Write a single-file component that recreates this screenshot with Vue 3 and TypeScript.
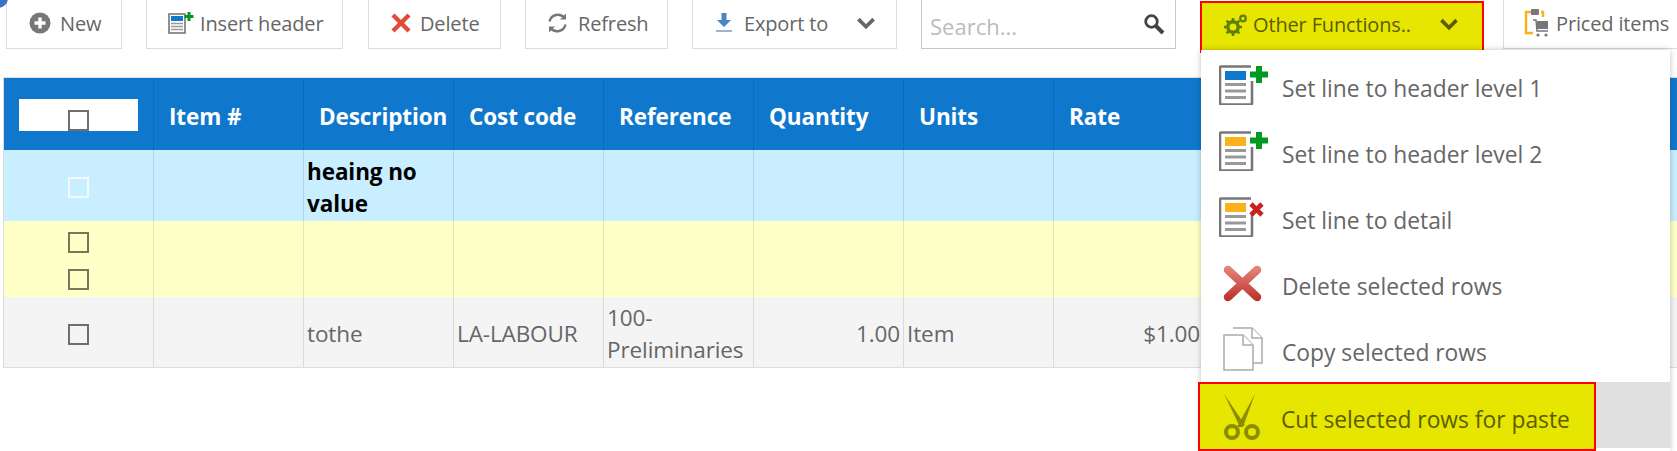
<script setup lang="ts">
const columns = ['Item #', 'Description', 'Cost code', 'Reference', 'Quantity', 'Units', 'Rate', '', '', '']
</script>

<template>
  <div class="page">
    <span class="corner"></span>
    <div class="toolbar">
      <button class="btn btn-new">
        <svg width="22" height="22" viewBox="0 0 22 22"><circle cx="11" cy="11" r="10.5" fill="#777" /><path d="M11 5.5v11M5.5 11h11" stroke="#fff" stroke-width="3.4" /></svg>
        New
      </button>
      <button class="btn btn-insert">
        <svg width="26" height="22" viewBox="0 0 26 22">
          <rect x="1" y="2" width="16" height="19" fill="#fff" stroke="#777" stroke-width="1.6" />
          <rect x="3" y="4" width="12" height="5" fill="#1078cc" />
          <path d="M3 11.5h12M3 14.5h12M3 17.5h12" stroke="#999" stroke-width="1.4" />
          <path d="M21 0v9M16.500 4.500h9" stroke="#009a22" stroke-width="3" />
        </svg>
        Insert header
      </button>
      <button class="btn btn-delete">
        <svg width="22" height="20" viewBox="0 0 22 20"><path d="M3 2l16 16M19 2L3 18" stroke="#e04b3a" stroke-width="4.400" /></svg>
        Delete
      </button>
      <button class="btn btn-refresh">
        <svg width="23" height="22" viewBox="0 0 22 22" fill="none" stroke="#777" stroke-width="2.400">
          <path d="M3 9.500A8.500 8.500 0 0 1 18 6" />
          <path d="M19 12.500A8.500 8.500 0 0 1 4 16" />
          <path d="M19.500 1.500v6h-6z" fill="#777" stroke="none" />
          <path d="M2.500 20.500v-6h6z" fill="#777" stroke="none" />
        </svg>
        Refresh
      </button>
      <button class="btn btn-export">
        <svg width="18" height="20" viewBox="0 0 18 20" fill="#4a86c5"><path d="M6.500 0h5v7h4.500L9 14 2 7h4.500z" /><rect x="1" y="17" width="16" height="2" fill="#9ab6d3" /></svg>
        <span class="btn-label">Export to</span>
        <svg class="chev" width="20" height="13" viewBox="0 0 18 12"><path d="M2 2l7 7 7-7" fill="none" stroke="#666" stroke-width="3.400" /></svg>
      </button>
      <div class="search">
        <span class="search-text">Search...</span>
        <svg width="22" height="22" viewBox="0 0 22 22" fill="none" stroke="#444"><circle cx="8.500" cy="8.500" r="5.800" stroke-width="2.800" /><path d="M13 13l7 7" stroke-width="4" /></svg>
      </div>
      <button class="btn btn-other">
        <svg width="26" height="24" viewBox="0 0 26 24" fill="#5f7f00">
          <circle cx="10" cy="14" r="5.200" fill="none" stroke="#5f7f00" stroke-width="3.400" />
          <path d="M10 14m0-9v3M10 20v3M1 14h3M16 14h3M3.600 7.600l2.200 2.200M14.200 18.200l2.200 2.200M3.600 20.400l2.200-2.200M14.200 9.800l2.200-2.200" stroke="#5f7f00" stroke-width="2.600" />
          <circle cx="20" cy="5.500" r="2.800" fill="none" stroke="#5f7f00" stroke-width="2.200" />
        </svg>
        <span class="btn-label">Other Functions..</span>
        <svg class="chev" width="20" height="13" viewBox="0 0 18 12"><path d="M2 2l7 7 7-7" fill="none" stroke="#5c5c00" stroke-width="3.400" /></svg>
      </button>
      <button class="btn btn-priced">
        <svg width="26" height="30" viewBox="0 0 26 30" fill="none">
          <path d="M7 4H2v21h7" stroke="#fbb01c" stroke-width="2.400" />
          <path d="M17 4h2v5" stroke="#fbb01c" stroke-width="2.400" />
          <rect x="7" y="1" width="8" height="6" rx="1" fill="#777" />
          <rect x="13" y="13" width="11" height="8" fill="#777" />
          <path d="M9 12h3l1 11h11" stroke="#777" stroke-width="1.500" />
          <circle cx="14" cy="27" r="1.600" fill="#777" />
          <circle cx="22" cy="27" r="1.600" fill="#777" />
        </svg>
        Priced items
      </button>
    </div>

    <div class="grid">
      <div class="row row-head">
        <div class="cell cell-check"><span class="head-check"><i class="check"></i></span></div>
        <div v-for="(c, i) in columns" :key="i" class="cell">{{ c }}</div>
      </div>
      <div class="row row-level1">
        <div class="cell cell-check"><i class="check check-light"></i></div>
        <div class="cell"></div>
        <div class="cell"><b>heaing no value</b></div>
        <div v-for="i in 8" :key="i" class="cell"></div>
      </div>
      <div class="row row-level2">
        <div class="cell cell-check cell-check-two"><i class="check check-olive"></i><i class="check check-olive"></i></div>
        <div v-for="i in 10" :key="i" class="cell"></div>
      </div>
      <div class="row row-detail">
        <div class="cell cell-check"><i class="check"></i></div>
        <div class="cell"></div>
        <div class="cell">tothe</div>
        <div class="cell">LA-LABOUR</div>
        <div class="cell">100-Preliminaries</div>
        <div class="cell cell-right">1.00</div>
        <div class="cell">Item</div>
        <div class="cell cell-right">$1.00</div>
        <div v-for="i in 3" :key="i" class="cell"></div>
      </div>
    </div>

    <div class="menu">
      <div class="menu-item">
        <svg class="menu-icon" width="50" height="40" viewBox="0 0 50 40">
          <path d="M32 1.500H2a1 1 0 0 0-1 1v36a1 1 0 0 0 1 1h30a1 1 0 0 0 1-1V16" fill="#fff" stroke="#777" stroke-width="2.600" />
          <rect x="6" y="6" width="21" height="9" fill="#1078cc" />
          <path d="M6 19.500h21M6 26h21M6 32.500h21" stroke="#999" stroke-width="3" />
          <path d="M40 1v17M31 9.500h18" stroke="#009a22" stroke-width="6" />
        </svg>
        <span class="menu-text">Set line to header level 1</span>
      </div>
      <div class="menu-item">
        <svg class="menu-icon" width="50" height="40" viewBox="0 0 50 40">
          <path d="M32 1.500H2a1 1 0 0 0-1 1v36a1 1 0 0 0 1 1h30a1 1 0 0 0 1-1V16" fill="#fff" stroke="#777" stroke-width="2.600" />
          <rect x="6" y="6" width="21" height="9" fill="#fbb01c" />
          <path d="M6 19.500h21M6 26h21M6 32.500h21" stroke="#999" stroke-width="3" />
          <path d="M40 1v17M31 9.500h18" stroke="#009a22" stroke-width="6" />
        </svg>
        <span class="menu-text">Set line to header level 2</span>
      </div>
      <div class="menu-item">
        <svg class="menu-icon" width="50" height="40" viewBox="0 0 50 40">
          <path d="M32 1.500H2a1 1 0 0 0-1 1v36a1 1 0 0 0 1 1h30a1 1 0 0 0 1-1V16" fill="#fff" stroke="#777" stroke-width="2.600" />
          <rect x="6" y="6" width="21" height="9" fill="#fbb01c" />
          <path d="M6 19.500h21M6 26h21M6 32.500h21" stroke="#999" stroke-width="3" />
          <path d="M32 7l11 11M43 7L32 18" stroke="#cc2020" stroke-width="4.600" />
        </svg>
        <span class="menu-text">Set line to detail</span>
      </div>
      <div class="menu-item">
        <svg class="menu-icon" width="50" height="40" viewBox="0 0 50 40">
          <defs>
            <linearGradient id="redx" gradientUnits="userSpaceOnUse" x1="0" y1="2" x2="0" y2="38">
              <stop offset="0" stop-color="#e88a80" />
              <stop offset="1" stop-color="#b8302a" />
            </linearGradient>
          </defs>
          <path d="M9 7l29 27M38 7L9 34" stroke="url(#redx)" stroke-width="8.500" stroke-linecap="round" />
        </svg>
        <span class="menu-text">Delete selected rows</span>
      </div>
      <div class="menu-item">
        <svg class="menu-icon" width="50" height="44" viewBox="0 0 50 44" fill="#fff" stroke="#aaa" stroke-width="1.500">
          <path d="M14 1h19l10 10v25h-9" />
          <path d="M33 1v10h10" />
          <path d="M5 8h19l10 10v25H5z" />
          <path d="M24 8v10h10" />
        </svg>
        <span class="menu-text">Copy selected rows</span>
      </div>
      <div class="menu-item menu-item-active">
        <div class="cut-mark">
          <svg class="menu-icon" width="50" height="48" viewBox="0 0 50 48" fill="none" stroke="#8c8c00">
            <circle cx="11" cy="39" r="6" stroke-width="4" />
            <circle cx="31" cy="39" r="6" stroke-width="4" />
            <path d="M3 1l21 31 -5 2z" fill="#8c8c00" stroke="none" />
            <path d="M34 1L16 34l6 0z" fill="#8c8c00" stroke="none" />
          </svg>
          <span class="menu-text">Cut selected rows for paste</span>
        </div>
      </div>
    </div>
  </div>
</template>

<style scoped>
.page {
  position: relative;
  width: 1677px;
  height: 451px;
  overflow: hidden;
  background: #fff;
  font-family: "Open Sans", "Noto Sans", sans-serif;
  color: #666;
}

.corner {
  position: absolute;
  left: -12px;
  top: -12px;
  width: 20px;
  height: 20px;
  border-radius: 50%;
  background: #3f6fc0;
}

.toolbar {
  display: flex;
  align-items: flex-start;
  height: 77px;
  padding-left: 6px;
}

.btn {
  display: flex;
  align-items: center;
  gap: 10px;
  height: 50px;
  margin-top: -1px;
  padding: 0 0 2px 21px;
  flex: none;
  background: #fff;
  border: 1px solid #ddd;
  font: inherit;
  font-size: 20px;
  letter-spacing: -0.15px;
  color: #666;
}

.btn-new { width: 116px; margin-right: 24px; padding-left: 22px; gap: 9px; }
.btn-insert { width: 197px; margin-right: 25px; padding-left: 21px; gap: 6px; }
.btn-delete { width: 133px; margin-right: 24px; padding-left: 21px; gap: 8px; }
.btn-refresh { width: 143px; margin-right: 24px; padding-left: 20px; gap: 9px; }
.btn-export { width: 205px; margin-right: 24px; padding-left: 22px; gap: 11px; }
.btn-label { flex: 1; text-align: left; }
.chev { margin-right: 20px; }

.search {
  display: flex;
  align-items: center;
  justify-content: space-between;
  flex: none;
  width: 255px;
  height: 50px;
  margin-top: -1px;
  margin-right: 24px;
  padding: 0 10px 0 8px;
  box-sizing: border-box;
  border: 1px solid #c8c8c8;
  font-size: 22px;
  color: #bbb;
}

.search-text { padding-top: 3px; }

.btn-other {
  box-sizing: border-box;
  width: 284px;
  height: 52px;
  margin-top: 1px;
  margin-right: 19px;
  padding-left: 21px;
  padding-bottom: 5px;
  gap: 4px;
  background: #e6e600;
  border: 2px solid #f00;
  color: #5c5c00;
}

.btn-other .chev { margin-right: 23px; }

.btn-priced {
  width: 190px;
  padding-left: 20px;
  gap: 6px;
}

.grid {
  margin-left: 3px;
  width: 1674px;
  border-top: 1px solid #ddd;
  border-left: 1px solid #ddd;
}

.row {
  display: grid;
  grid-template-columns: repeat(11, 150px);
  box-sizing: border-box;
}

.cell {
  padding: 4px 3px 0;
  border-right: 1px solid rgba(0, 0, 0, 0.1);
  font-size: 22.500px;
  line-height: 32px;
  letter-spacing: -0.1px;
  display: flex;
  align-items: center;
  box-sizing: border-box;
}

.cell-right { justify-content: flex-end; }

.cell-check {
  justify-content: center;
  gap: 16px;
}

.cell-check-two { flex-direction: column; }

.row-head {
  height: 72px;
  background: #1078cc;
  color: #fff;
  font-weight: 700;
}

.row-head .cell { padding-left: 15px; padding-top: 6px; color: #fff; }
.row-head .cell-check { padding: 2px 0 0; }

.head-check {
  display: flex;
  justify-content: center;
  align-items: flex-end;
  width: 119px;
  height: 32px;
  background: #fff;
}

.row-level1 { height: 71px; background: #c9eeff; color: #000; }
.row-level2 { height: 76px; background: #ffffc8; }
.row-detail { height: 71px; background: #f4f4f4; border-bottom: 1px solid #ddd; }

.check {
  display: block;
  box-sizing: border-box;
  width: 21px;
  height: 21px;
  border: 2px solid #6e6e6e;
}

.check-light { border-color: #f2f9ff; }
.check-olive { border-color: #77775c; }

.menu {
  position: absolute;
  left: 1201px;
  top: 50px;
  width: 469px;
  height: 401px;
  padding-top: 2px;
  box-sizing: border-box;
  background: #fff;
  box-shadow: 0 0 6px rgba(0, 0, 0, 0.25);
}

.menu-item {
  position: relative;
  display: flex;
  align-items: center;
  height: 66px;
  font-size: 22.800px;
  color: #666;
}

.menu-icon {
  position: absolute;
  left: 18px;
  top: 50%;
  transform: translateY(-50%);
}

.menu-text {
  padding: 6px 0 0 81px;
  white-space: nowrap;
}

.menu-item-active {
  background: #e0e0e0;
}

.cut-mark {
  position: absolute;
  left: -3px;
  top: 0;
  display: flex;
  align-items: center;
  box-sizing: border-box;
  width: 398px;
  height: 69px;
  background: #e6e600;
  border: 2px solid #f00;
  color: #5c5c00;
}

.cut-mark .menu-icon { left: 21px; }
</style>

<style>
html, body { margin: 0; background: #fff; }
</style>
